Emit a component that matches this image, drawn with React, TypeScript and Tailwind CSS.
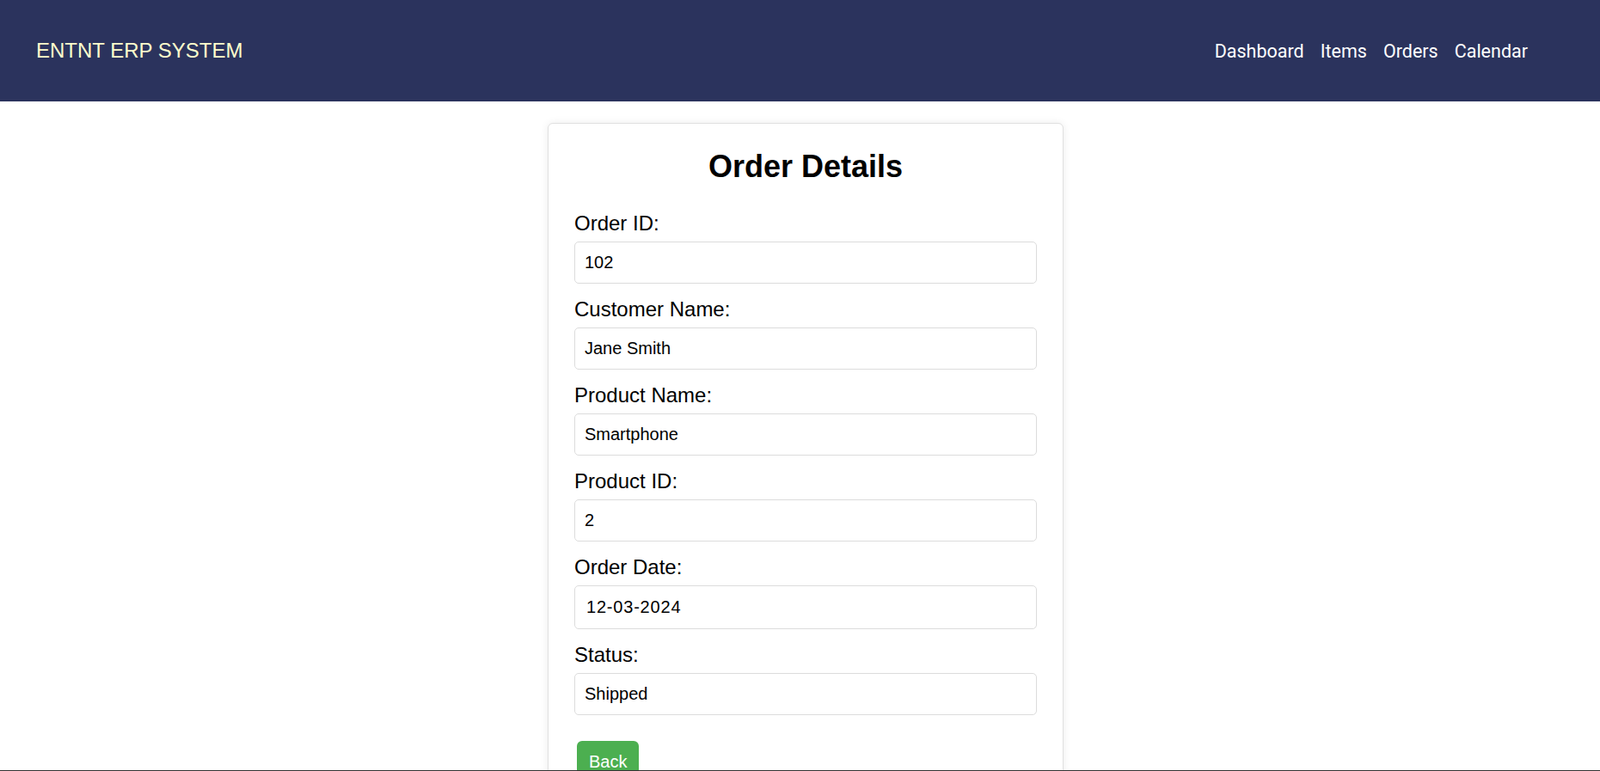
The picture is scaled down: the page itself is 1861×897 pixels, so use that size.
import React from 'react';

const fields = [
  { label: 'Order ID:', value: '102' },
  { label: 'Customer Name:', value: 'Jane Smith' },
  { label: 'Product Name:', value: 'Smartphone' },
  { label: 'Product ID:', value: '2' },
  { label: 'Order Date:', value: '12-03-2024', tall: true },
  { label: 'Status:', value: 'Shipped' },
];

function Navbar() {
  return (
    <header className="h-[118px] bg-[#2b335d] flex items-center justify-between pl-[42px] pr-[84px]">
      <div className="text-[24px] leading-[28px] text-[#ffffcc] font-['Liberation_Sans',Arial,sans-serif]">
        ENTNT ERP SYSTEM
      </div>
      <nav className="flex items-center gap-[19px] text-[21.5px] text-white font-['Roboto',sans-serif] pt-[3px]">
        <a href="#">Dashboard</a>
        <a href="#">Items</a>
        <a href="#">Orders</a>
        <a href="#">Calendar</a>
      </nav>
    </header>
  );
}

export default function App() {
  return (
    <div className="min-h-screen bg-white font-['Liberation_Sans',Arial,sans-serif] text-black overflow-hidden">
      <Navbar />
      <div className="flex justify-center pl-[13px] mt-[25px]">
        <div className="w-[600px] bg-white border border-[#e0e0e0] rounded-[6px] shadow-[0_0_10px_rgba(0,0,0,0.08)] px-[30px] pt-[30px] pb-[30px]">
          <h2 className="text-center text-[36px] leading-[40px] font-bold mb-[33px]">Order Details</h2>
          {fields.map((f) => (
            <div key={f.label}>
              <label className="block text-[24px] leading-[25px] mb-[9px]">{f.label}</label>
              <input
                readOnly
                value={f.value}
                className={`block w-full ${f.tall ? 'h-[51px] pl-[13px] tracking-[0.8px]' : 'h-[49px] pl-[11px]'} border border-[#dcdcdc] rounded-[5px] text-[20px] text-black bg-white mb-[17px] outline-none`}
              />
            </div>
          ))}
          <button className="mt-[13px] ml-[3px] bg-[#4caf50] text-white text-[20px] leading-[23px] rounded-[6px] px-[14px] py-[13px]">
            Back
          </button>
        </div>
      </div>
      <div className="fixed bottom-0 left-0 right-0 h-px bg-[#333]" />
    </div>
  );
}
